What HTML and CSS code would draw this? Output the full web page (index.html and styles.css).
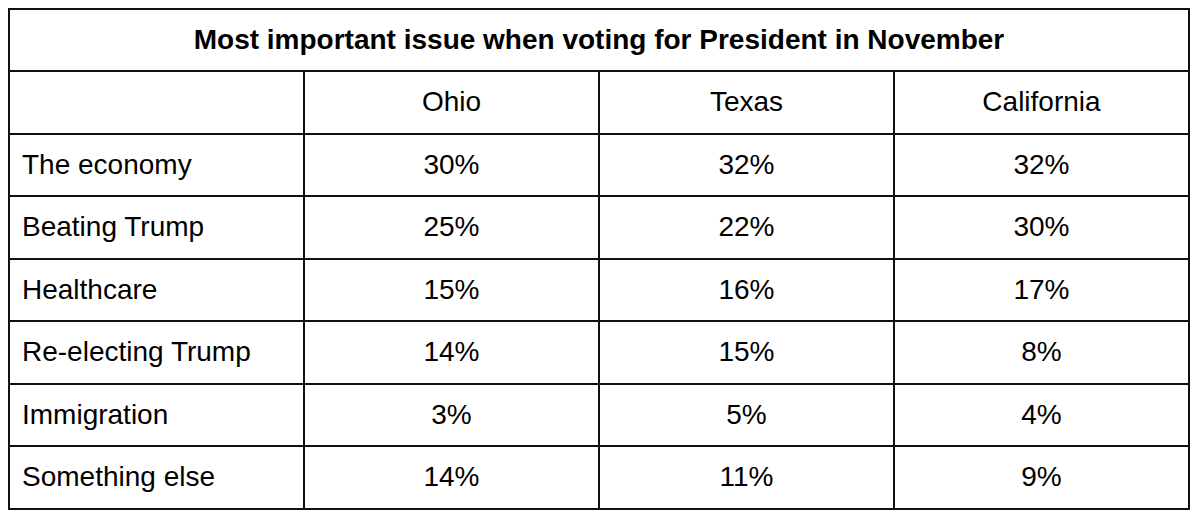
FILE: index.html
```html
<!DOCTYPE html>
<html>
<head>
<meta charset="utf-8">
<link rel="stylesheet" href="styles.css">
</head>
<body>
<table class="poll">
  <colgroup><col class="c"><col class="c"><col class="c"><col class="c"></colgroup>
  <tr class="title-row"><th colspan="4">Most important issue when voting for President in November</th></tr>
  <tr class="row"><td></td><td class="num">Ohio</td><td class="num">Texas</td><td class="num">California</td></tr>
  <tr class="row"><td class="label">The economy</td><td class="num">30%</td><td class="num">32%</td><td class="num">32%</td></tr>
  <tr class="row"><td class="label">Beating Trump</td><td class="num">25%</td><td class="num">22%</td><td class="num">30%</td></tr>
  <tr class="row"><td class="label">Healthcare</td><td class="num">15%</td><td class="num">16%</td><td class="num">17%</td></tr>
  <tr class="row"><td class="label">Re-electing Trump</td><td class="num">14%</td><td class="num">15%</td><td class="num">8%</td></tr>
  <tr class="row"><td class="label">Immigration</td><td class="num">3%</td><td class="num">5%</td><td class="num">4%</td></tr>
  <tr class="row"><td class="label">Something else</td><td class="num">14%</td><td class="num">11%</td><td class="num">9%</td></tr>
</table>
</body>
</html>
```
FILE: styles.css
```css
html, body {
  margin: 0;
  background: #fff;
}
body {
  padding: 8px 0 0 8px;
  font-family: "Liberation Sans", Arial, sans-serif;
  color: #000;
}
.poll {
  border-collapse: collapse;
  table-layout: fixed;
  width: 1182px;
  font-size: 28px;
  line-height: 32px;
}
.poll .c {
  width: 25%;
}
.poll th, .poll td {
  border: 2px solid #111;
  padding: 0 12px;
  vertical-align: middle;
}
.title-row th {
  height: 60px;
  font-weight: bold;
  text-align: center;
  padding: 0;
}
.row td {
  height: 60.5px;
  padding-top: 0;
  padding-bottom: 0;
}
.label {
  text-align: left;
}
.num {
  text-align: center;
}
```
